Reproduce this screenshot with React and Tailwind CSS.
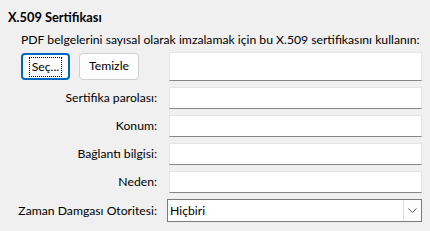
export default function App() {
  const font = { fontFamily: 'Lato, "Noto Sans", sans-serif' };
  const fields = ["Sertifika parolası:", "Konum:", "Bağlantı bilgisi:", "Neden:"];
  return (
    <div className="w-[430px] h-[231px] bg-[#f0f0f0] text-[12.2px] text-black overflow-hidden" style={font}>
      <div className="pl-2 pt-[9px] font-bold text-[12.8px] leading-[16px]">X.509 Sertifikası</div>
      <div className="pl-[21px] pt-[7px] leading-[16px] whitespace-nowrap">
        PDF belgelerini sayısal olarak imzalamak için bu X.509 sertifikasını kullanın:
      </div>
      <div className="grid grid-cols-[148px_253px] gap-x-3 gap-y-[6px] pl-[9px] pt-[4px] items-center">
        <div className="flex gap-[9px] pl-3">
          <button className="w-[49px] h-[27px] rounded-[4px] border-2 border-[#0067c0] bg-[#fdfdfd] flex items-center justify-center">
            <span className="border border-dotted border-black px-[2px] leading-[18px]">Seç...</span>
          </button>
          <button className="w-[60px] h-[27px] rounded-[4px] border border-[#d0d0d0] bg-[#fdfdfd]">Temizle</button>
        </div>
        <div className="h-[29px] bg-white border border-[#e5e5e5] border-b-[#868686]" />
        {fields.map((f) => (
          <>
            <div key={f + "l"} className="text-right leading-[16px]">{f}</div>
            <div key={f + "i"} className="h-[22px] bg-white border border-[#e5e5e5] border-b-[#868686]" />
          </>
        ))}
        <div className="text-right leading-[16px]">Zaman Damgası Otoritesi:</div>
        <div className="h-[23px] bg-white border border-[#7a7a7a] flex -ml-[2px] w-[255px]">
          <div className="flex-1 pl-[2px] leading-[21px]">Hiçbiri</div>
          <div className="w-[18px] h-full bg-[#fdfdfd] border-l border-[#e0e0e0] flex items-center justify-center">
            <svg width="9" height="5" viewBox="0 0 9 5"><path d="M0.5 0.5 L4.5 4.5 L8.5 0.5" fill="none" stroke="#555" strokeWidth="1" /></svg>
          </div>
        </div>
      </div>
    </div>
  );
}
